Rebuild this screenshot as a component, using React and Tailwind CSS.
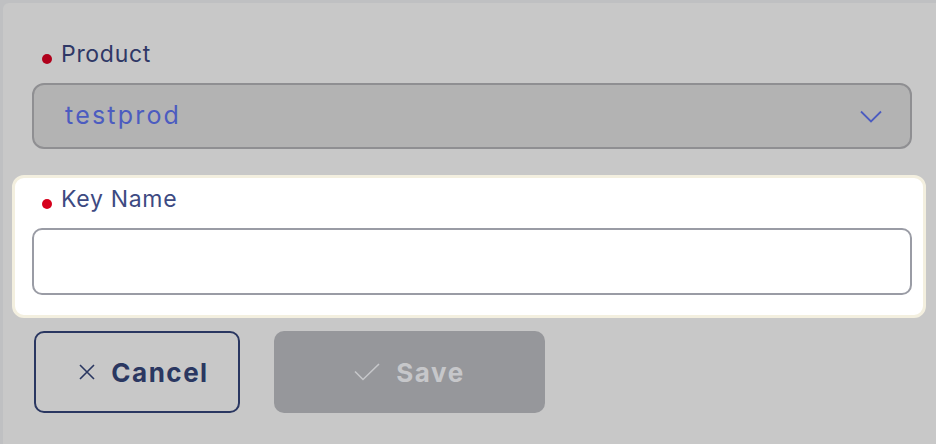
import { useState } from 'react'

const font = { fontFamily: 'Inter, "Noto Sans", sans-serif' }

function Label({ text, dim }) {
  return (
    <div className="flex items-end h-[32px] pl-[10px]">
      <span
        className={`w-[10px] h-[10px] rounded-full mb-[6px] mr-[9px] ${dim ? 'bg-[#b0001b]' : 'bg-[#d6001c]'}`}
      />
      <span className={`text-[23px] leading-[32px] tracking-[0.7px] ${dim ? 'text-[#2f3866]' : 'text-[#3d4a82]'}`}>
        {text}
      </span>
    </div>
  )
}

export default function App() {
  const [keyName, setKeyName] = useState('')

  return (
    <div className="w-[936px] h-[444px] overflow-hidden bg-[#bfc0c2] pt-[3px] pl-[3px]" style={font}>
      <div className="h-full bg-[#c8c8c8] rounded-tl-[6px] pl-[9px] pr-[10px] pt-[35px]">
        <div className="pl-[20px] pr-[14px]">
          <Label text="Product" dim />
          <div className="mt-[13px] h-[66px] rounded-[12px] border-2 border-[#8f8f92] bg-[#b3b3b3] flex items-center justify-between pl-[31px] pr-[28px]">
            <span className="text-[25px] tracking-[2.2px] text-[#4c5cc0]">testprod</span>
            <svg width="22" height="13" viewBox="0 0 22 13" fill="none">
              <path d="M1 1.5 L11 11.5 L21 1.5" stroke="#4c5cc0" strokeWidth="1.8" />
            </svg>
          </div>
        </div>

        <div className="mt-[26px] rounded-[12px] border-[3px] border-[#f3efdf] bg-white pt-[5px] pb-[20px] pl-[17px] pr-[11px]">
          <Label text="Key Name" />
          <input
            className="mt-[13px] w-full h-[67px] rounded-[10px] border-2 border-[#9a9ca5] bg-white px-[20px] text-[23px] outline-none"
            value={keyName}
            onChange={e => setKeyName(e.target.value)}
          />
        </div>

        <div className="mt-[13px] flex gap-[34px] pl-[22px]">
          <button className="w-[206px] h-[82px] rounded-[10px] border-2 border-[#2a3761] flex items-center justify-center gap-[16px] pl-[14px] text-[#2a3761]">
            <svg width="16" height="16" viewBox="0 0 16 16" fill="none">
              <path d="M1 1 L15 15 M15 1 L1 15" stroke="#2a3761" strokeWidth="1.6" />
            </svg>
            <span className="text-[26px] font-bold tracking-[1.5px]">Cancel</span>
          </button>
          <button className="w-[271px] h-[82px] rounded-[10px] bg-[#96979b] flex items-center justify-center gap-[16px] text-[#c6c7ca]">
            <svg width="26" height="18" viewBox="0 0 26 18" fill="none">
              <path d="M1 8.5 L9 16.5 L25 1" stroke="#c6c7ca" strokeWidth="1.6" />
            </svg>
            <span className="text-[26px] font-bold tracking-[1.5px]">Save</span>
          </button>
        </div>
      </div>
    </div>
  )
}
